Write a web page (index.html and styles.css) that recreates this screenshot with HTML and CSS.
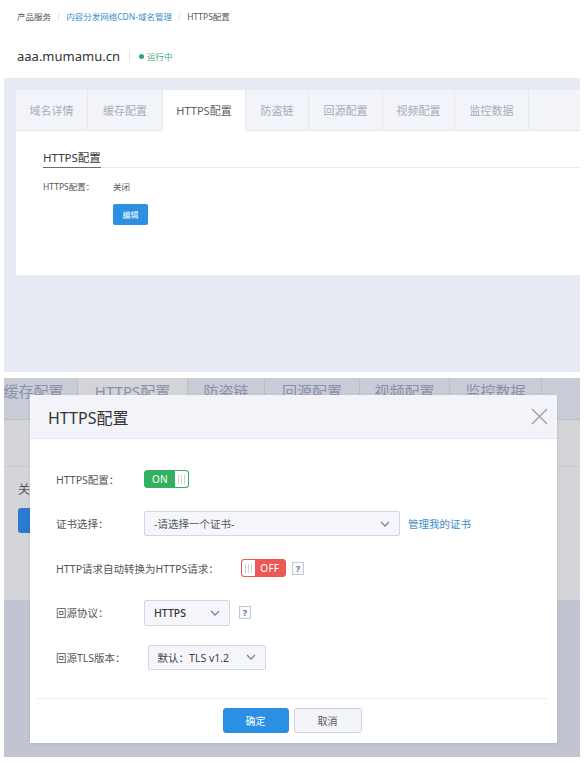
FILE: index.html
```html
<!DOCTYPE html>
<html lang="zh-CN">
<head>
<meta charset="utf-8">
<title>HTTPS配置</title>
<link rel="stylesheet" href="styles.css">
</head>
<body>
<div class="page">
  <section class="shot shot-top">
    <header class="head">
      <nav class="crumbs">
        <span class="crumb">产品服务</span><span class="sep">/</span><span class="crumb link">内容分发网络CDN-域名管理</span><span class="sep">/</span><span class="crumb">HTTPS配置</span>
      </nav>
      <div class="domain-row">
        <h1 class="domain">aaa.mumamu.cn</h1>
        <span class="vsep"></span>
        <span class="status"><i class="dot"></i>运行中</span>
      </div>
    </header>
    <div class="panel">
      <div class="card">
        <ul class="tabs">
          <li class="tab w72">域名详情</li>
          <li class="tab w75">缓存配置</li>
          <li class="tab w83 active">HTTPS配置</li>
          <li class="tab w63">防盗链</li>
          <li class="tab w74">回源配置</li>
          <li class="tab w72">视频配置</li>
          <li class="tab w74">监控数据</li>
          <li class="tab filler"></li>
        </ul>
        <div class="card-body">
          <h2 class="section-title"><span>HTTPS配置</span></h2>
          <div class="field"><span class="field-label">HTTPS配置：</span><span class="field-value">关闭</span></div>
          <button class="btn-edit">编辑</button>
        </div>
      </div>
    </div>
  </section>

  <section class="shot shot-bottom">
    <ul class="dim-tabs">
      <li class="dim-tab d1">缓存配置</li>
      <li class="dim-tab d2 active">HTTPS配置</li>
      <li class="dim-tab d3">防盗链</li>
      <li class="dim-tab d4">回源配置</li>
      <li class="dim-tab d5">视频配置</li>
      <li class="dim-tab d6">监控数据</li>
      <li class="dim-tab filler"></li>
    </ul>
    <div class="dim-card">
      <div class="dim-heading"></div>
      <div class="dim-value">关闭</div>
      <div class="dim-btn"></div>
    </div>

    <div class="modal">
      <div class="modal-head">
        <h3 class="modal-title">HTTPS配置</h3>
        <svg class="close" width="17" height="17" viewBox="0 0 17 17"><path d="M1 1L16 16M16 1L1 16" stroke="#9c9ea3" stroke-width="1.4" fill="none"/></svg>
      </div>
      <div class="modal-body">
        <div class="row">
          <span class="label">HTTPS配置：</span>
          <span class="switch on"><span class="switch-text">ON</span><span class="knob"></span></span>
        </div>
        <div class="row">
          <span class="label">证书选择：</span>
          <span class="select s-cert"><span>-请选择一个证书-</span><svg width="10" height="6" viewBox="0 0 10 6"><path d="M1 1L5 5L9 1" stroke="#7b8495" stroke-width="1.3" fill="none"/></svg></span>
          <span class="link-cert">管理我的证书</span>
        </div>
        <div class="row">
          <span class="label">HTTP请求自动转换为HTTPS请求：</span>
          <span class="switch off"><span class="knob"></span><span class="switch-text">OFF</span></span>
          <span class="help h-off">?</span>
        </div>
        <div class="row">
          <span class="label">回源协议：</span>
          <span class="select s-proto"><span class="strong">HTTPS</span><svg width="10" height="6" viewBox="0 0 10 6"><path d="M1 1L5 5L9 1" stroke="#7b8495" stroke-width="1.3" fill="none"/></svg></span>
          <span class="help h-proto">?</span>
        </div>
        <div class="row">
          <span class="label">回源TLS版本：</span>
          <span class="select s-tls"><span class="plain">默认：TLS v1.2</span><svg width="10" height="6" viewBox="0 0 10 6"><path d="M1 1L5 5L9 1" stroke="#7b8495" stroke-width="1.3" fill="none"/></svg></span>
        </div>
      </div>
      <div class="modal-foot">
        <button class="btn btn-ok">确定</button>
        <button class="btn btn-cancel">取消</button>
      </div>
    </div>
  </section>
</div>
</body>
</html>
```

FILE: styles.css
```css
* { box-sizing: border-box; }

html, body {
  margin: 0;
  padding: 0;
  background: #ffffff;
}

body {
  width: 584px;
  font-family: "Noto Sans", "Noto Sans CJK SC", sans-serif;
  color: #444;
}

.page {
  display: flex;
  flex-direction: column;
}

.shot {
  margin: 0 4px;
}

/* ---------- top screenshot ---------- */
.head {
  height: 78px;
  padding: 11px 0 0 13px;
  background: #fff;
}

.crumbs {
  display: flex;
  align-items: center;
  height: 12px;
  font-size: 8.5px;
  line-height: 12px;
  color: #555;
}

.crumb.link { color: #3b8ec9; }

.sep {
  color: #d6d9e0;
  margin: 0 6px;
}

.domain-row {
  display: flex;
  align-items: center;
  height: 20px;
  margin-top: 23px;
}

.domain {
  margin: 0;
  font-size: 13px;
  font-weight: 400;
  line-height: 20px;
  color: #333;
}

.vsep {
  width: 1px;
  height: 10px;
  background: #e3e5ea;
  margin: 0 9px 0 9px;
}

.status {
  display: flex;
  align-items: center;
  font-size: 8.5px;
  color: #3aab75;
}

.dot {
  display: inline-block;
  width: 5px;
  height: 5px;
  border-radius: 50%;
  background: #2fa96b;
  margin-right: 3px;
}

.panel {
  height: 294px;
  padding: 12px 0 0 12px;
  background: #e7e9f3;
}

.card {
  height: 185px;
  background: #fff;
  display: flex;
  flex-direction: column;
}

.tabs {
  display: flex;
  height: 41px;
  margin: 0;
  padding: 0;
  list-style: none;
  background: #f2f4fa;
}

.tab {
  display: flex;
  align-items: center;
  justify-content: center;
  border-right: 1px solid #e5e8f0;
  border-bottom: 1px solid #e3e7ef;
  font-size: 11px;
  color: #a6acb8;
}

.tab.active {
  background: #fff;
  border-bottom-color: #fff;
  color: #5b5f69;
}

.tab.filler { flex: 1; border-right: none; }
.w72 { width: 72px; }
.w75 { width: 75px; }
.w83 { width: 83px; }
.w63 { width: 63px; }
.w74 { width: 74px; }

.card-body {
  padding-left: 27px;
}

.section-title {
  margin: 0;
  padding-top: 18px;
  font-size: 11.5px;
  font-weight: 400;
  line-height: 18px;
  color: #3a3a3a;
  border-bottom: 1px solid #e8eaef;
  display: flex;
}

.section-title span {
  display: inline-block;
  border-bottom: 1.5px solid #6a6d73;
  margin-bottom: -1px;
}

.field {
  display: flex;
  margin-top: 12px;
  font-size: 8.5px;
  line-height: 14px;
  color: #555;
}

.field-label { width: 70px; }

.btn-edit {
  display: block;
  margin: 10px 0 0 70px;
  width: 35px;
  height: 21px;
  padding: 0;
  border: none;
  border-radius: 2px;
  background: #2d8fe2;
  color: #fff;
  font-family: inherit;
  font-size: 8px;
}

/* ---------- bottom screenshot ---------- */
.shot-bottom {
  position: relative;
  height: 379px;
  margin-top: 6px;
  overflow: hidden;
  background: #c2c5d1;
}

.dim-tabs {
  display: flex;
  height: 42px;
  margin: 0;
  padding: 0;
  list-style: none;
  background: #c9ccd6;
  border-bottom: 1px solid #bcc0ca;
}

.dim-tab {
  display: flex;
  justify-content: center;
  padding-top: 2px;
  border-right: 1px solid #b9bdc8;
  font-size: 15px;
  line-height: 22px;
  color: #8791aa;
}

.dim-tab.active { background: #d3d4d7; }
.d1 { width: 88px; margin-left: -14px; }
.d2 { width: 110px; }
.d3 { width: 77px; }
.d4 { width: 95px; }
.d5 { width: 90px; }
.d6 { width: 92px; }
.dim-tab.filler { flex: 1; border-right: none; }

.dim-card {
  height: 180px;
  padding-left: 14px;
  background: #d4d5d9;
}

.dim-heading {
  height: 47px;
  margin-left: -14px;
  border-bottom: 1px solid #c9cace;
}

.dim-value {
  margin-top: 15px;
  font-size: 12px;
  line-height: 16px;
  color: #55565b;
}

.dim-btn {
  width: 40px;
  height: 25px;
  margin-top: 10px;
  border-radius: 3px;
  background: #2a7bcf;
}

/* ---------- modal ---------- */
.modal {
  position: absolute;
  left: 26px;
  top: 17px;
  width: 527px;
  height: 348px;
  background: #fff;
  display: flex;
  flex-direction: column;
  box-shadow: 0 1px 3px rgba(60, 66, 90, 0.15);
}

.modal-head {
  height: 44px;
  flex: none;
  display: flex;
  align-items: center;
  justify-content: space-between;
  padding: 0 9px 0 18px;
  background: #f2f4fa;
  border-bottom: 1px solid #e2e5ee;
}

.modal-title {
  margin: 0;
  font-size: 16px;
  font-weight: 400;
  color: #333;
}

.close { display: block; }

.modal-body {
  height: 259px;
  flex: none;
  padding: 18px 0 0 26px;
}

.row {
  display: flex;
  align-items: center;
  height: 44.5px;
}

.label {
  min-width: 88px;
  padding-right: 22px;
  font-size: 10.5px;
  color: #555;
  white-space: nowrap;
}

.switch {
  display: inline-flex;
  width: 45px;
  height: 18px;
  border-radius: 3px;
  overflow: hidden;
  border: 1px solid;
}

.switch.on { border-color: #33b161; background: #33b161; }
.switch.off { border-color: #e95656; background: #ec5757; }

.switch-text {
  flex: 1;
  display: flex;
  align-items: center;
  justify-content: center;
  font-size: 10px;
  color: #fff;
  letter-spacing: 0.3px;
}

.knob {
  width: 13px;
  background:
    linear-gradient(90deg, transparent 3px, #cfcfcf 3px, #cfcfcf 4px, transparent 4px, transparent 6px, #cfcfcf 6px, #cfcfcf 7px, transparent 7px, transparent 9px, #cfcfcf 9px, #cfcfcf 10px, transparent 10px) no-repeat center / 13px 9px,
    #fff;
}

.switch.on .knob { border-radius: 0 2px 2px 0; }
.switch.off .knob { border-radius: 2px 0 0 2px; }

.help {
  display: inline-flex;
  align-items: center;
  justify-content: center;
  width: 12px;
  height: 13px;
  border: 1px solid #c4c8d1;
  background: #f8f9fb;
  font-size: 9px;
  font-weight: 700;
  color: #4a78a8;
}

.h-off { margin-left: 6px; }
.h-proto { margin-left: 9px; }

.select {
  display: inline-flex;
  align-items: center;
  justify-content: space-between;
  height: 25px;
  padding: 0 9px 0 9px;
  border: 1px solid #d2d7e1;
  border-radius: 2px;
  background: #f4f6fb;
  font-size: 10.5px;
  color: #555;
}

.select svg { flex: none; }
.s-cert { width: 256px; }
.s-proto { width: 86px; height: 26px; }
.s-tls { width: 118px; }

.strong { color: #333; font-weight: 500; }
.plain { color: #3d3d3d; }

.link-cert {
  margin-left: 8px;
  font-size: 10.5px;
  color: #3c8cc3;
}

.modal-foot {
  flex: 1;
  display: flex;
  justify-content: center;
  gap: 5px;
  margin: 0 10px 0 7px;
  padding-top: 9px;
  border-top: 1px solid #eceef2;
}

.btn {
  width: 66px;
  height: 25px;
  padding: 0;
  border-radius: 3px;
  font-family: inherit;
  font-size: 10px;
}

.btn-ok {
  border: 1px solid #2a8de2;
  background: #2b8fe4;
  color: #fff;
}

.btn-cancel {
  width: 68px;
  border: 1px solid #cdd2dc;
  background: #f3f5f9;
  color: #555;
}
```
